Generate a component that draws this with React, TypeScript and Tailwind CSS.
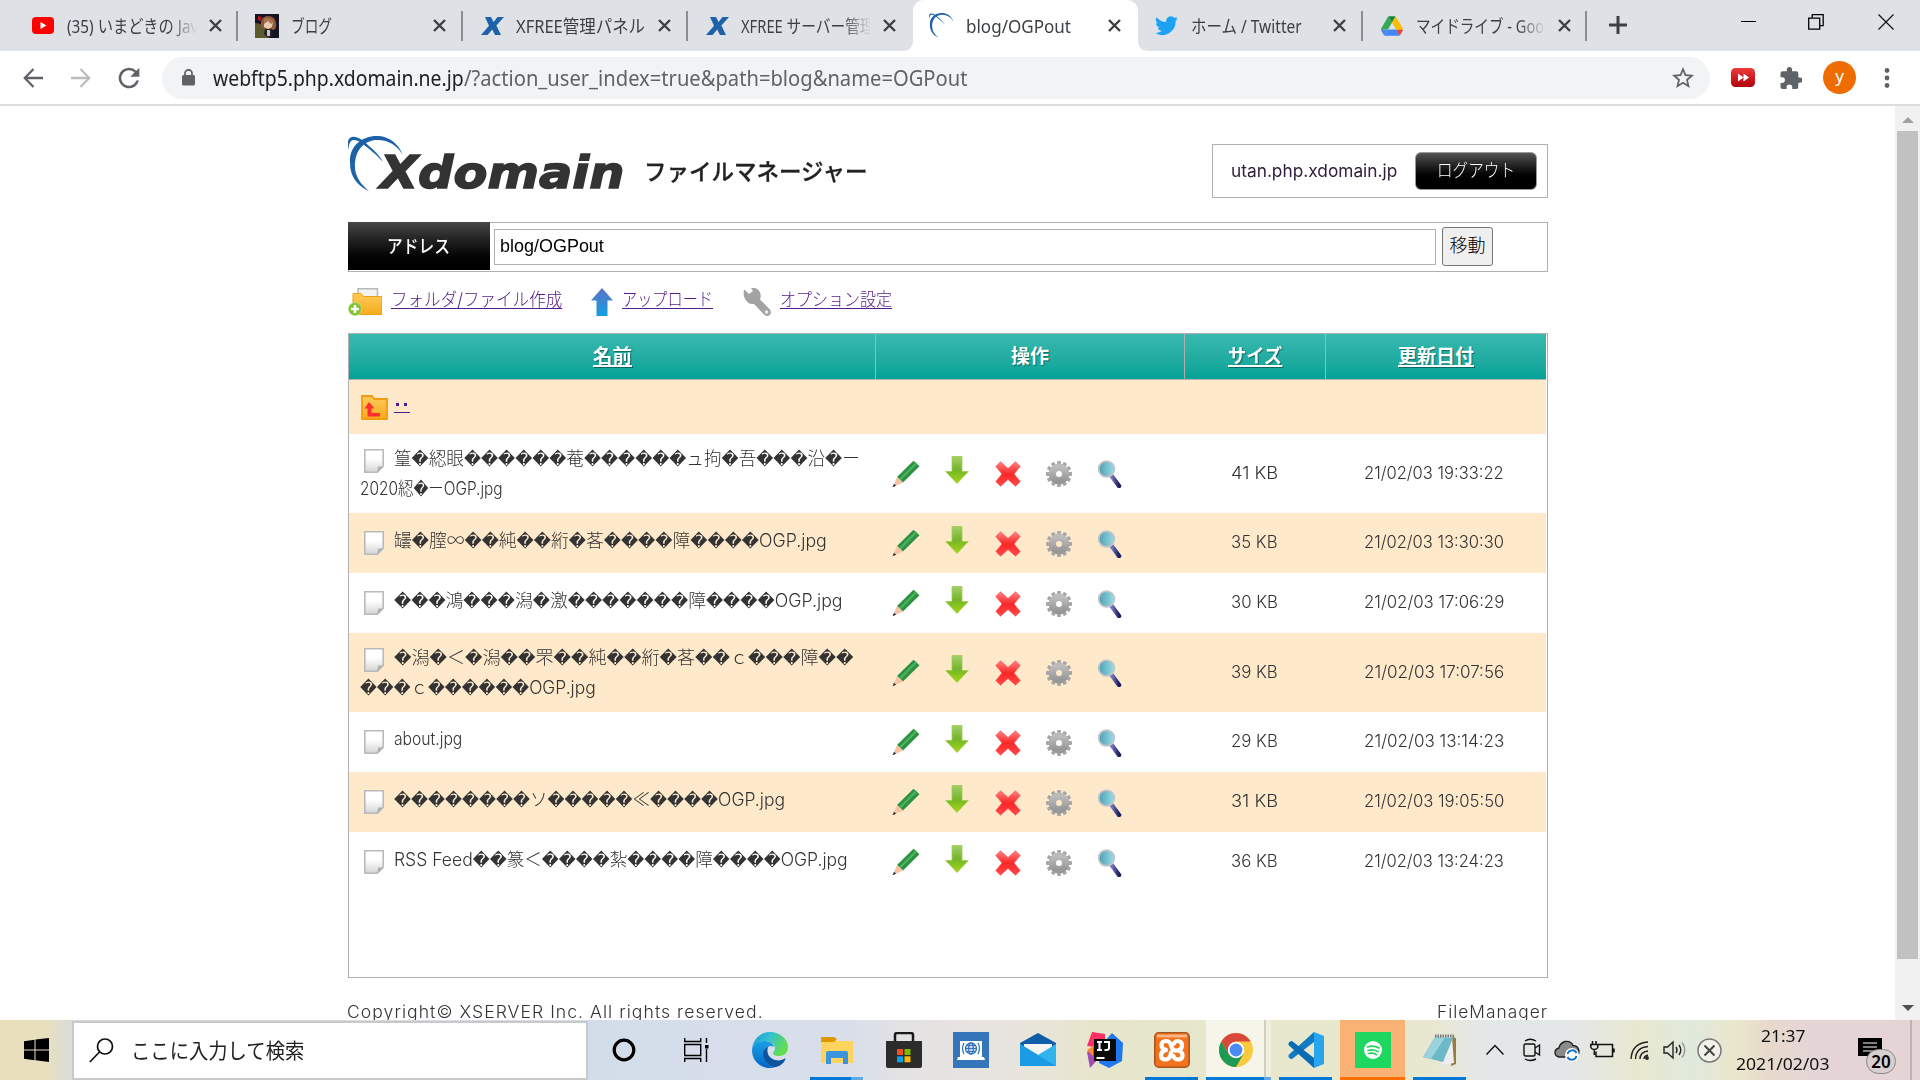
import React, { useLayoutEffect, useRef, useState } from "react";

/** Single line of text whose glyphs are condensed or widened to a given width. */
function Fit({ w, className = "", inner = "", children }: { w: number; className?: string; inner?: string; children: React.ReactNode }) {
  const ref = useRef<HTMLSpanElement>(null);
  const [k, setK] = useState(1);
  useLayoutEffect(() => {
    if (ref.current && ref.current.offsetWidth) setK(w / ref.current.offsetWidth);
  }, [w]);
  return (
    <span className={"block shrink-0 whitespace-nowrap " + className} style={{ width: w }}>
      <span ref={ref} className={"inline-block origin-left " + inner} style={{ transform: `scaleX(${k})` }}>
        {children}
      </span>
    </span>
  );
}

const UI = "font-['Noto_Sans','Noto_Sans_CJK_JP',sans-serif]";
const GOTHIC = "font-['Inter','Noto_Sans_CJK_JP',sans-serif] font-light";

/* ---------- Browser chrome ---------- */

const YouTube = () => (
  <svg width="22" height="17" viewBox="0 0 22 17"><rect width="22" height="17" rx="4" fill="#f00" /><path d="M8.5 5v7l6-3.5z" fill="#fff" /></svg>
);
const Portrait = () => (
  <svg width="24" height="24" viewBox="0 0 24 24">
    <rect width="24" height="24" fill="#171321" />
    <path d="M0 9q7 0 10 6t4 9H0z" fill="#5d5a2c" />
    <path d="M6 8q1-6 7-6 7 0 8 7 1 5-2 7l-10-1q-4-2-3-7z" fill="#8b5a3c" />
    <path d="M9 8q4-3 9 0l-1 5-4 2-4-2z" fill="#e9c9b0" />
    <path d="M9 5q5-3 10 3l-3 2-3-3-4 3z" fill="#a87350" />
    <path d="M3 2l4 1-1 4-3-1z" fill="#b01a1a" />
    <path d="M10 15h7l1 5-2 3h-4l-3-3z" fill="#24202c" /><path d="M12 16h3v6h-3z" fill="#cfc4c0" />
  </svg>
);
const XMark = () => (
  <svg width="23" height="18" viewBox="0 0 23 18"><path d="M4 0h6l2.600 5L16.500 0H23l-7.600 8.600L20 18h-6l-2.700-5.600L6.500 18H0l8-9.300z" fill="#1d62a8" /></svg>
);
const Swoosh = ({ size }: { size: number }) => (
  <svg width={size} height={size} viewBox="0 0 56 56">
    <path d="M55 19C49 5 38-1 26 0 10 2 1 13 2 27c0 13 7 23 19 28C11 47 6 38 7 27 8 14 15 6 27 4c12-1 21 4 28 15z" fill="#1d62a8" />
    <path d="M0 14C-1 6 0 2 4 1c5-1 11 3 17 9 6 5 11 10 14 16C28 18 21 13 15 8 10 4 5 3 3 5c-2 2-2 5-3 9z" fill="#1d62a8" />
  </svg>
);
const Bird = () => (
  <svg width="23" height="20" viewBox="1 3 22 18.500"><path fill="#1da1f2" d="M23 5.100a9 9 0 0 1-2.600.7 4.500 4.500 0 0 0 2-2.500 9 9 0 0 1-2.900 1.100 4.500 4.500 0 0 0-7.700 4.100A12.800 12.800 0 0 1 2.500 3.800a4.500 4.500 0 0 0 1.400 6 4.500 4.500 0 0 1-2-.6c0 2.200 1.500 4 3.600 4.500a4.500 4.500 0 0 1-2 .1 4.500 4.500 0 0 0 4.200 3.100A9 9 0 0 1 1 18.800a12.800 12.800 0 0 0 19.700-11.400A9 9 0 0 0 23 5.100z" /></svg>
);
const Drive = () => (
  <svg width="22" height="20" viewBox="0 0 87.3 78">
    <path d="m6.600 66.850 3.850 6.650c.8 1.400 1.950 2.500 3.300 3.300l13.750-23.800h-27.500c0 1.550.4 3.100 1.200 4.500z" fill="#4285f4" />
    <path d="m43.650 25-13.750-23.800c-1.350.8-2.500 1.900-3.300 3.300l-25.400 44a9.060 9.060 0 0 0 -1.200 4.500h27.500z" fill="#34a853" />
    <path d="m73.550 76.800c1.350-.8 2.500-1.900 3.300-3.300l1.600-2.750 7.650-13.250c.8-1.400 1.200-2.950 1.200-4.500h-27.500l5.850 11.500z" fill="#ea4335" />
    <path d="m43.650 25 13.750-23.800c-1.350-.8-2.900-1.200-4.500-1.200h-18.500c-1.600 0-3.150.45-4.500 1.200z" fill="#188038" />
    <path d="m59.800 53h-32.300l-13.750 23.800c1.350.8 2.900 1.200 4.500 1.200h50.800c1.600 0 3.150-.45 4.500-1.200z" fill="#4285f4" />
    <path d="m73.400 26.500-12.700-22c-.8-1.400-1.950-2.500-3.300-3.300l-13.750 23.800 16.150 28h27.450c0-1.550-.4-3.100-1.200-4.500z" fill="#fbbc04" />
  </svg>
);
const Close = () => (
  <svg width="13" height="13" viewBox="0 0 13 13" stroke="#3c4043" strokeWidth="2.400"><path d="M1 1l11 11M12 1L1 12" /></svg>
);

type TabData = { icon: React.ReactNode; title: string; w: number; fade?: boolean; active?: boolean; line?: boolean };
const TABS: TabData[] = [
  { icon: <YouTube />, title: "(35) いまどきの Jav", w: 131, fade: true, line: true },
  { icon: <Portrait />, title: "ブログ", w: 41, line: true },
  { icon: <XMark />, title: "XFREE管理パネル", w: 129, line: true },
  { icon: <XMark />, title: "XFREE サーバー管理", w: 134, fade: true },
  { icon: <Swoosh size={25} />, title: "blog/OGPout", w: 105, active: true },
  { icon: <Bird />, title: "ホーム / Twitter", w: 111, line: true },
  { icon: <Drive />, title: "マイドライブ - Goo", w: 128, fade: true, line: true },
];

function Tab({ t }: { t: TabData }) {
  return (
    <div className={"relative flex h-[51px] w-[224.850px] shrink-0 items-center " + (t.active ? "rounded-t-[11px] bg-white" : "")}>
      <div className="ml-[16px] flex w-[26px] justify-center">{t.icon}</div>
      <div className={"ml-[11px] w-[134px] overflow-hidden pt-px " + (t.fade ? "[mask-image:linear-gradient(to_right,black_76%,transparent_97%)]" : "")}>
        <Fit w={t.w} className="text-[18px] leading-[30px] text-[#3c4043]">{t.title}</Fit>
      </div>
      <div className="ml-[8px] -mt-px"><Close /></div>
      {t.line && <div className="absolute top-[11px] right-0 h-[30px] w-[2px] bg-[#8b8e93]" />}
      {t.active && (
        <>
          <svg className="absolute bottom-0 left-[-11px]" width="11" height="11"><path d="M11 0v11H0Q11 11 11 0z" fill="#fff" /></svg>
          <svg className="absolute right-[-11px] bottom-0" width="11" height="11"><path d="M0 0v11h11Q0 11 0 0z" fill="#fff" /></svg>
        </>
      )}
    </div>
  );
}

function TabStrip() {
  return (
    <div className="flex h-[51px] bg-[#dee1e6] pl-[13.500px]">
      {TABS.map((t) => <Tab key={t.title} t={t} />)}
      <div className="flex flex-1 items-center">
        <svg className="-mt-px ml-[21.500px]" width="18" height="18" stroke="#3c4043" strokeWidth="3"><path d="M9 0v18M0 9h18" /></svg>
        <svg className="ml-[114px] -mt-2" width="15" height="15" stroke="#000"><path d="M0 7.500h15" /></svg>
        <svg className="ml-[52px] -mt-2" width="16" height="16" fill="none" stroke="#000" strokeWidth="1.300"><path d="M.7 4.200h11v11H.7zM4.200 4V.7h11v11H12" /></svg>
        <svg className="ml-[54px] -mt-2" width="16" height="16" stroke="#111" strokeWidth="1.200"><path d="M.5 .5l15 15M15.500.5l-15 15" /></svg>
      </div>
    </div>
  );
}

function Toolbar() {
  return (
    <div className="flex h-[55px] items-center border-b-2 border-[#dcdde0] bg-white">
      <svg className="ml-[23px]" width="20" height="20" fill="none" stroke="#5f6368" strokeWidth="2.300"><path d="M20 10H2M10.500 1L1.800 10l8.700 9" /></svg>
      <svg className="ml-[28px]" width="20" height="20" fill="none" stroke="#bbbdc0" strokeWidth="2.300"><path d="M0 10h18M9.500 1l8.700 9-8.700 9" /></svg>
      <svg className="ml-[27px]" width="22" height="22" viewBox="3.500 3.500 17 17" fill="#5f6368"><path d="M17.650 6.350A7.960 7.960 0 0 0 12 4a8 8 0 1 0 7.730 10h-2.080A6 6 0 1 1 12 6c1.660 0 3.140.69 4.220 1.780L13 11h7V4z" /></svg>
      <div className="ml-[22px] flex h-[42px] w-[1548px] items-center rounded-full bg-[#f1f3f4]">
        <svg className="ml-[20px]" width="13" height="17" viewBox="0 0 13 17"><rect y="6" width="13" height="10.500" rx="1.500" fill="#5f6368" /><path d="M3 7V4.300a3.500 3.500 0 0 1 7 0V7" fill="none" stroke="#5f6368" strokeWidth="1.800" /></svg>
        <Fit w={251} className="ml-[18px] text-[21px] leading-[36px] text-[#202124]">webftp5.php.xdomain.ne.jp</Fit>
        <Fit w={503} className="text-[21px] leading-[36px] text-[#5f6368]">/?action_user_index=true&amp;path=blog&amp;name=OGPout</Fit>
        <svg className="ml-[705px]" width="22" height="22" viewBox="2 2 20 20" fill="#5f6368"><path d="M22 9.240l-7.190-.62L12 2 9.190 8.630 2 9.240l5.460 4.730L5.820 21 12 17.270 18.180 21l-1.630-7.030L22 9.240zM12 15.400l-3.760 2.270 1-4.280-3.320-2.880 4.380-.38L12 6.100l1.710 4.040 4.380.38-3.320 2.880 1 4.280L12 15.400z" /></svg>
      </div>
      <svg className="ml-[21px]" width="24" height="19" viewBox="0 0 24 19"><defs><linearGradient id="ff" x2="0" y2="1"><stop stopColor="#f03a3a" /><stop offset="1" stopColor="#b0000a" /></linearGradient></defs><rect width="24" height="19" rx="4.500" fill="url(#ff)" /><path d="M7 5.500v8l5.500-4zM12.500 5.500v8l5.500-4z" fill="#fff" /></svg>
      <svg className="ml-[25px]" width="22" height="22" viewBox="1.500 1 21 21" fill="#5f6368"><path d="M20.500 11H19V7a2 2 0 0 0-2-2h-4V3.500a2.500 2.500 0 0 0-5 0V5H4a2 2 0 0 0-2 2v3.800h1.500a2.700 2.700 0 0 1 0 5.400H2V20a2 2 0 0 0 2 2h3.800v-1.500a2.700 2.700 0 0 1 5.400 0V22H17a2 2 0 0 0 2-2v-4h1.500a2.500 2.500 0 0 0 0-5z" /></svg>
      <div className="ml-[21px] flex size-[33px] items-center justify-center rounded-full bg-[#ee6c00] pb-1 text-[17px] text-white">y</div>
      <svg className="ml-[28px]" width="6" height="22" fill="#5f6368"><circle cx="3" cy="3.500" r="2.400" /><circle cx="3" cy="11" r="2.400" /><circle cx="3" cy="18.500" r="2.400" /></svg>
    </div>
  );
}

/* ---------- File manager icons ---------- */

const Defs = () => (
  <svg className="absolute size-0">
    <defs>
      <linearGradient id="gPage" x2="0" y2="1"><stop offset=".4" stopColor="#fff" /><stop offset="1" stopColor="#d4d4d4" /></linearGradient>
      <linearGradient id="gFolder" x2="0" y2="1"><stop stopColor="#ffcb5c" /><stop offset="1" stopColor="#f7ab1c" /></linearGradient>
      <linearGradient id="gUp" x2="0" y2="1"><stop stopColor="#6070c8" /><stop offset="1" stopColor="#12a0e0" /></linearGradient>
      <linearGradient id="gDown" x2="0" y2="1"><stop stopColor="#a3cf68" /><stop offset=".5" stopColor="#74b52a" /><stop offset="1" stopColor="#a5d610" /></linearGradient>
      <linearGradient id="gX" x2="0" y2="1"><stop stopColor="#ff8585" /><stop offset=".5" stopColor="#f92626" /><stop offset="1" stopColor="#ff4a4a" /></linearGradient>
      <linearGradient id="gGear" x2="0" y2="1"><stop stopColor="#bcbcbc" /><stop offset="1" stopColor="#979797" /></linearGradient>
      <linearGradient id="gLens" x2="1" y2="0"><stop stopColor="#4f9fb2" /><stop offset="1" stopColor="#9adce8" /></linearGradient>
      <linearGradient id="gHandle" x2="1" y2="0"><stop stopColor="#7478c0" /><stop offset="1" stopColor="#1a1d58" /></linearGradient>
    </defs>
  </svg>
);
const Page = () => (
  <svg width="20" height="24"><path d="M.8.8h18.400v16.400l-5.800 6H.8z" fill="url(#gPage)" stroke="#bababa" strokeWidth="1.600" /><path d="M19.500 17.500h-5.300l-1 6z" fill="#b0b0b0" /></svg>
);
const Pencil = () => (
  <svg width="28" height="28" viewBox="0 0 28 28"><path d="M5 17L21.500.8l6 5.500L11 22.500z" fill="#2e9245" /><path d="M8 19.500L24.500 3" stroke="#4db45c" strokeWidth="2" /><path d="M5 17l6 5.500L.8 27z" fill="#f4c3a4" /><path d="M2 23.800L4.200 25.800.5 27.300z" fill="#333" /></svg>
);
const Download = () => (
  <svg className="-mt-[7px]" width="24" height="28"><path d="M7 .5h10v15h6.300L12 27.500.7 15.500H7z" fill="url(#gDown)" stroke="#a0cc50" strokeWidth=".8" /></svg>
);
const Delete = () => (
  <svg width="26" height="26"><path d="M5.500.8L13 7.500 20.500.8l4.700 4.700L19 13l6.200 7.500-4.700 4.700L13 18.500l-7.500 6.700L.8 20.500 7 13 .8 5.500z" fill="url(#gX)" stroke="#ff5a5a" strokeWidth=".8" strokeLinejoin="round" /></svg>
);
const Gear = () => (
  <svg width="26" height="26" viewBox="-13 -13 26 26">
    {Array.from({ length: 12 }, (_, i) => <rect key={i} x="-1.900" y="-13" width="3.800" height="5" rx=".8" fill="#a6a6a6" transform={`rotate(${i * 30})`} />)}
    <circle r="6.700" fill="none" stroke="url(#gGear)" strokeWidth="7.400" />
  </svg>
);
const Magnify = () => (
  <svg width="25" height="28"><path d="M15 16.500l7 9.500" stroke="url(#gHandle)" strokeWidth="4.600" strokeLinecap="round" /><circle cx="9.500" cy="9" r="7.800" fill="url(#gLens)" stroke="#c3c3c8" strokeWidth="1.800" /></svg>
);
const NewFolder = () => (
  <svg width="34" height="28"><path d="M10 .8h19.500v12H10z" fill="#f3f3f3" stroke="#b9b9b9" strokeWidth="1.500" /><path d="M5 5.500h8l2.500 3H34v18H5z" fill="url(#gFolder)" stroke="#efa013" /><circle cx="7" cy="21" r="6.500" fill="#82c32c" stroke="#b9dd8b" /><path d="M7 17v8M3 21h8" stroke="#fff" strokeWidth="2.500" /></svg>
);
const Upload = () => (
  <svg width="22" height="28"><path d="M11 0l11 12.500h-5.500V28h-11V12.500H0z" fill="url(#gUp)" /></svg>
);
const Wrench = () => (
  <svg width="28" height="28"><path d="M1 8.500Q0 3 1.500 1.500L6 6l4-3L8 0q8-1 9.500 6 .6 3-.5 5.500L27 21.500q2.500 5-2.500 6.500-2.500 0-4-2L11 16Q4 17 1 8.500z" fill="#a3a3a3" /><circle cx="23.500" cy="24" r="1.700" fill="#eee" /></svg>
);
const UpFolder = () => (
  <svg width="27" height="25"><path d="M1 1h10l2.500 3H26v20H1z" fill="url(#gFolder)" stroke="#f29c10" strokeWidth="1.800" /><path d="M8 7l5.500 6.500h-3V18H19v3.500H6.500v-8h-3z" fill="#ff2d2d" /></svg>
);

/* ---------- File manager ---------- */

type Row = { lines: [string, number][]; size: string; date: string };
const ROWS: Row[] = [
  { lines: [["篁�綛眼������菴������ュ拘�吾���沿�ー", 466], ["2020綛�ーOGP.jpg", 143]], size: "41 KB", date: "21/02/03 19:33:22" },
  { lines: [["罎�膣∞��純��絎�茖����障����OGP.jpg", 433]], size: "35 KB", date: "21/02/03 13:30:30" },
  { lines: [["���鴻���潟�激�������障����OGP.jpg", 449]], size: "30 KB", date: "21/02/03 17:06:29" },
  { lines: [["�潟�＜�潟��罘��純��絎�茖��ｃ���障��", 459], ["���ｃ������OGP.jpg", 236]], size: "39 KB", date: "21/02/03 17:07:56" },
  { lines: [["about.jpg", 68]], size: "29 KB", date: "21/02/03 13:14:23" },
  { lines: [["��������ソ�����≪����OGP.jpg", 391]], size: "31 KB", date: "21/02/03 19:05:50" },
  { lines: [["RSS Feed��篆＜����紮����障����OGP.jpg", 454]], size: "36 KB", date: "21/02/03 13:24:23" },
];

const nameFace = (s: string) => {
  if (s.startsWith("\uFFFD")) return "font-['DejaVu_Sans',sans-serif] text-[17px] font-normal";
  if (/^[\x20-\x7e]+$/.test(s)) return "text-[18px]";
  return "font-['Noto_Sans_CJK_JP',sans-serif]";
};

/** Unmappable bytes are set in a face that has the black diamond glyph. */
function Name({ text, w }: { text: string; w: number }) {
  return (
    <Fit w={w} className="h-[30px] text-[18px] leading-[30px]">
      {text.split(/(\uFFFD+|[\x20-\x7e]+)/).filter(Boolean).map((s, i) => (
        <span key={i} className={nameFace(s)}>{s}</span>
      ))}
    </Fit>
  );
}

function FileRow({ row, alt }: { row: Row; alt: boolean }) {
  const two = row.lines.length > 1;
  const latin = /^[\x20-\x7e]+$/.test(row.lines[0][0]);
  return (
    <div className={"grid w-[1197px] grid-cols-[527px_309px_141px_220px] " + (two ? "h-[79px] " : "h-[60px] ") + (alt ? "bg-[#ffe9cb]" : "bg-white")}>
      <div className={"pl-[11px] " + (two ? "pt-[8px]" : "pt-[11px]")}>
        <div className="flex h-[30px]">
          <div className="mt-[7px] ml-[4px] w-[29.500px]"><Page /></div>
          <div className={latin ? "mt-px" : ""}><Name text={row.lines[0][0]} w={row.lines[0][1]} /></div>
        </div>
        {two && <Name text={row.lines[1][0]} w={row.lines[1][1]} />}
      </div>
      <div className="flex items-center pt-px pl-[4px]">
        {[<Pencil />, <Download />, <Delete />, <Gear />, <Magnify />].map((icon, i) => (
          <div key={i} className={"flex w-[51px] justify-center " + (i < 2 ? "-mt-px" : "")}>{icon}</div>
        ))}
      </div>
      <div className="flex items-center justify-center pr-[3px] pb-px"><Fit w={47} className="text-[17.500px]">{row.size}</Fit></div>
      <div className="flex items-center justify-center pr-[4px] pb-px"><Fit w={140} className="text-[17.500px]">{row.date}</Fit></div>
    </div>
  );
}

function Head({ label, w, last, plain }: { label: string; w: number; last?: boolean; plain?: boolean }) {
  return (
    <div className={"flex items-center justify-center border-b border-[#b0b0b0] bg-linear-to-b from-[#37b8b0] to-[#00a396] " + (last ? "" : "border-r")}>
      <Fit w={w} className="text-[19px] leading-[30px] font-bold text-white [text-shadow:1px_1px_1px_rgba(0,60,60,0.6)]" inner={plain ? "" : "underline decoration-[1.500px] underline-offset-[2px]"}>{label}</Fit>
    </div>
  );
}

const LINK = "text-[18px] leading-[30px] text-[#551a8b]";
const LINE = "underline decoration-1 underline-offset-[2px]";

function FileManager() {
  return (
    <div className={"ml-[348px] w-[1200px] shrink-0 text-[#333] " + GOTHIC}>
      <div className="flex h-[116px]">
        <div className="mt-[30px] grid">
          <div className="col-start-1 row-start-1"><Swoosh size={56} /></div>
          <Fit w={245} className="col-start-1 row-start-1 mt-[10px] ml-[32px] font-['DejaVu_Sans',sans-serif] text-[45px] leading-[54px] font-bold italic [-webkit-text-stroke:1.500px_#333]">Xdomain</Fit>
        </div>
        <Fit w={223} className="mt-[48px] ml-[19px] text-[23px] leading-[36px] font-medium text-[#222] [-webkit-text-stroke:0.300px_#222]">ファイルマネージャー</Fit>
        <div className="mt-[38px] ml-auto flex h-[54px] w-[336px] items-center border border-[#b0b0b0]">
          <Fit w={166} className="ml-[18px] text-[17.500px] font-normal text-[#33203c]">utan.php.xdomain.jp</Fit>
          <div className="ml-[18px] flex h-[38px] w-[122px] items-center justify-center rounded-[6px] border border-[#999] bg-linear-to-b from-[#555] to-black to-80%">
            <Fit w={78} className="pb-[2px] text-[18px] text-white">ログアウト</Fit>
          </div>
        </div>
      </div>
      <div className="flex h-[50px] border border-[#b0b0b0]">
        <div className="-mt-px -ml-px flex h-[48px] w-[142px] items-center justify-center bg-linear-to-b from-[#484848] to-black">
          <Fit w={63} className="mr-[2px] text-[18px] font-medium text-white">アドレス</Fit>
        </div>
        <div className="mt-[6px] ml-[4px] flex h-[36px] w-[942px] items-center border border-[#b0b0b0] pb-[2px]">
          <Fit w={104} className="ml-[5px] font-['Liberation_Sans',sans-serif] text-[19px] font-normal text-black">blog/OGPout</Fit>
        </div>
        <div className="mt-[4px] ml-[6px] flex h-[39px] w-[51px] items-center justify-center rounded-[3px] border border-[#767676] bg-[#efefef]">
          <Fit w={36} className="pb-[3px] text-[18px] font-light text-black">移動</Fit>
        </div>
      </div>
      <div className="flex h-[61px] pt-[16px]">
        <NewFolder />
        <Fit w={171} className={"-mt-[3px] ml-[9px] " + LINK} inner={LINE}>フォルダ/ファイル作成</Fit>
        <div className="ml-[29px]"><Upload /></div>
        <Fit w={91} className={"-mt-[3px] ml-[9px] " + LINK} inner={LINE}>アップロード</Fit>
        <div className="ml-[30px]"><Wrench /></div>
        <Fit w={112} className={"-mt-[3px] ml-[9px] " + LINK} inner={LINE}>オプション設定</Fit>
      </div>
      <div className="h-[645px] border border-[#b0b0b0]">
        <div className="grid h-[46px] w-[1197px] grid-cols-[527px_309px_141px_220px]">
          <Head label="名前" w={39} />
          <Head label="操作" w={38} plain />
          <Head label="サイズ" w={54} />
          <Head label="更新日付" w={76} last />
        </div>
        <div className="flex h-[54px] w-[1197px] bg-[#ffe9cb] pt-[15px] pl-[12px]">
          <UpFolder />
          <svg className="mt-[7px] ml-[6px]" width="16" height="12"><path d="M0 10.500h16" stroke="#551a8b" /><path d="M2 1h3v3H2zM10 1h3v3h-3z" fill="#551a8b" /></svg>
        </div>
        {ROWS.map((r, i) => <FileRow key={r.date} row={r} alt={i % 2 === 1} />)}
      </div>
      <div className="mt-[19px] flex justify-between text-[17px] leading-[30px]">
        <Fit w={417} className="-ml-px tracking-[1px]">Copyright© XSERVER Inc. All rights reserved.</Fit>
        <Fit w={111} className="tracking-[1px]">FileManager</Fit>
      </div>
    </div>
  );
}

/* ---------- Taskbar ---------- */

const Edge = () => (
  <svg width="36" height="36" viewBox="0 0 36 36">
    <defs>
      <linearGradient id="e1" x2="1" y2=".4"><stop stopColor="#1598d8" /><stop offset=".5" stopColor="#35c0d0" /><stop offset="1" stopColor="#62dd50" /></linearGradient>
      <linearGradient id="e2" x2="0" y2="1"><stop stopColor="#1ba0e4" /><stop offset="1" stopColor="#0067c8" /></linearGradient>
    </defs>
    <path d="M0 16C2 6 9 0 18 0c10 0 18 7 18 15 0 6-4 9-9 9-4 0-6-1-6-3 0-1 2-2 2-5 0-3-4-7-10-7C7 9 1 12 0 16z" fill="url(#e1)" />
    <path d="M0 18C0 12 6 9 12 9c5 0 9 2 10 6-6-3-11 2-10 9 1 6 5 11 11 12C10 38 0 30 0 18z" fill="url(#e2)" />
    <path d="M17 14c-5 2-7 7-5 12 2 6 7 10 12 9 4-1 8-4 9-7 1-1 0-2-1-1-5 3-14 1-16-5-1-3-1-6 1-8z" fill="#0c529e" />
  </svg>
);
const Explorer = () => (
  <svg width="32" height="27"><path d="M0 1h13l3 3h16v22H0z" fill="#ffd45e" /><path d="M0 1q0-1 1-1h12l3 2-3 3H0z" fill="#df9800" /><path d="M5 27V16q0-2 2-2h18q2 0 2 2v11h-5v-6H10v6z" fill="#3b95dc" /></svg>
);
const Store = () => (
  <svg width="36" height="36"><path d="M9 11V3q0-2 2-2h14q2 0 2 2v8" fill="none" stroke="#1a1a1a" strokeWidth="2.500" /><path d="M0 9h36v25q0 2-2 2H2q-2 0-2-2z" fill="#2c2c2c" /><path d="M11 17h6v6h-6z" fill="#f25022" /><path d="M18.500 17h6v6h-6z" fill="#7fba00" /><path d="M11 24.300h6v6h-6z" fill="#00a4ef" /><path d="M18.500 24.300h6v6h-6z" fill="#ffb900" /></svg>
);
const Remote = () => (
  <svg width="36" height="36"><path d="M0 0h36v36H0z" fill="#3575ba" /><path d="M7 9h22v16h2l1 3H4l1-3h2z" fill="#fff" /><g fill="none" stroke="#3575ba" strokeWidth="1.300"><circle cx="18" cy="16.500" r="5.500" /><ellipse cx="18" cy="16.500" rx="2.300" ry="5.500" /><path d="M12.500 16.500h11M13.500 13.500h9M13.500 19.500h9M11 11q-3 5 0 11M25 11q3 5 0 11" /></g></svg>
);
const Mail = () => (
  <svg width="36" height="34"><path d="M0 10L18 0l18 10v8H0z" fill="#0f5ca8" /><path d="M4 11h28v12H4z" fill="#f4f4f4" /><path d="M0 11l18 11 18-11v22H0z" fill="#31b4ee" /><path d="M0 33h36L18 22 0 11z" fill="#1b9be4" /></svg>
);
const Idea = () => (
  <svg width="36" height="36"><path d="M5 0l13 2v14L0 14z" fill="#fb2f63" /><path d="M0 20l8-6 4 12-9 10z" fill="#a24bb5" /><path d="M0 18l6-4v10z" fill="#f98d2b" /><path d="M25 1l11 10-1 18-13 7-10-5 4-20z" fill="#1f78ee" /><path d="M7 7h22v22H7z" fill="#0a0a0a" /><path d="M9.500 26h8" stroke="#fff" strokeWidth="2" /><path d="M10 10h5M12.500 10v8M10 18h5M17 10h5v6q0 2-2.500 2H17.500" fill="none" stroke="#fff" strokeWidth="2" /></svg>
);
const Xampp = () => (
  <svg width="36" height="36">
    <rect x=".8" y=".8" width="34.400" height="34.400" rx="4" fill="#f3731d" stroke="#a8581f" strokeWidth="1.600" />
    <path d="M3 2.500h30v3H3z" fill="#f9b487" />
    <path d="M12 18Q7.500 17 7.500 13q0-4 4.500-4 4 0 5 4l1 3q1 3 5 2.500 5-.5 5-5 0-4.500-4.500-4.500-2.500 0-3.500 2.500M12 18q-5 1.500-5 5.500 0 4 4.500 4 4 0 5-4.500l.5-2.500M24 18.500q4.500 1 4.500 5 0 4-4.500 4-3.500 0-4.500-3.500" fill="none" stroke="#fff" strokeWidth="4.200" strokeLinecap="round" strokeLinejoin="round" />
  </svg>
);
const Chrome = () => (
  <svg width="34" height="34" viewBox="-17 -17 34 34"><circle r="17" fill="#fbc93c" /><path d="M-14.700-8.500A17 17 0 0 1 14.700-8.500L0-8.500-7.400 4.200z" fill="#d9483b" /><path d="M-14.700-8.500A17 17 0 0 0 0 17L7.400 4.200-7.400 4.200z" fill="#1e9a55" /><circle r="8.200" fill="#fff" /><circle r="6.400" fill="#4c8bf5" /></svg>
);
const Code = () => (
  <svg width="36" height="36"><path d="M26 0l10 4v28l-10 4V0z" fill="#29a5ee" /><path d="M26 0v10L4 27q-1.500.5-3-1.500-1.200-1.500 0-3z" fill="#0f7bc4" /><path d="M26 36V26L4 9Q2.500 8.500 1 10.500q-1.200 1.500 0 3z" fill="#0a6db3" /></svg>
);
const Spotify = () => (
  <svg width="36" height="36"><path d="M0 0h36v36H0z" fill="#1ed760" /><circle cx="18" cy="18" r="9" fill="#fff" /><path d="M12.500 15q6-2 11.500 1M13 18.500q5-1.500 10 1M13.500 21.500q4-1 8 1" fill="none" stroke="#1ed760" strokeWidth="1.700" strokeLinecap="round" /></svg>
);
const Notepad = () => (
  <svg width="34" height="32"><path d="M29 3l4 1v26l-5 2z" fill="#9b7b45" /><path d="M29 3l2 26-13 2z" fill="#eceef0" /><path d="M12 3l18 1-10 24L0 23z" fill="#6ab8c8" /><path d="M12 3l10 .5L8 25l-8-2z" fill="#9bd3dc" /><path d="M12 2h19" stroke="#777" strokeWidth="3" strokeDasharray="1.500 1" /></svg>
);

const APPS: { icon: React.ReactNode; open?: "plain" | "stack" | "active" | "alert" }[] = [
  { icon: <Edge /> },
  { icon: <Explorer />, open: "stack" },
  { icon: <Store /> },
  { icon: <Remote /> },
  { icon: <Mail /> },
  { icon: <Idea /> },
  { icon: <Xampp />, open: "plain" },
  { icon: <Chrome />, open: "active" },
  { icon: <Code />, open: "plain" },
  { icon: <Spotify />, open: "alert" },
  { icon: <Notepad />, open: "plain" },
];

function TaskButton({ icon, open }: (typeof APPS)[number]) {
  return (
    <div className="relative flex w-[67px] shrink-0 items-center justify-center">
      {open === "active" && <div className="absolute inset-y-0 left-px flex w-[65px] bg-[#f6f5ea]"><div className="ml-[58px] w-[2px] bg-[#cfcfbb]" /><div className="flex-1 bg-[#efefdf]" /></div>}
      {open === "alert" && <div className="absolute inset-y-0 left-px w-[65px] bg-[#fab174]" />}
      <div className={"relative " + (open === "active" ? "-ml-[5px]" : "")}>{icon}</div>
      {open === "plain" && <div className="absolute bottom-0 left-[7px] h-[3px] w-[53px] bg-[#0078d7]" />}
      {open === "stack" && <div className="absolute bottom-0 left-[7px] flex h-[3px] w-[53px] bg-[#5fa9e6]"><div className="w-[41px] bg-[#0078d7]" /></div>}
      {open === "active" && <div className="absolute bottom-0 left-px flex h-[3px] w-[65px] bg-[#5fa9e6]"><div className="w-[58px] bg-[#0078d7]" /></div>}
      {open === "alert" && <div className="absolute bottom-0 left-px h-[3px] w-[65px] bg-[#ff6f00]" />}
    </div>
  );
}

function Tray() {
  return (
    <div className="flex items-center">
      <svg className="ml-[13px]" width="18" height="12" fill="none" stroke="#111" strokeWidth="1.500"><path d="M.5 10.500L9 1.500l8.500 9" /></svg>
      <svg className="ml-[19px]" width="18" height="24" fill="none" stroke="#111" strokeWidth="1.400"><rect x="1" y="6" width="11" height="12" rx="1.500" /><path d="M12 10l4.500-3v10L12 14M2 3q5-3.500 11 0M2 21q5 3 11 0" /></svg>
      <svg className="mt-[2px] ml-[13px]" width="26" height="22"><path d="M5 17q-4-1-4-4.500Q1 9 5 8q1-5 6-6.500 6-1 8 4 5 0 6 5.500 0 5-5 6z" fill="#8a8a8a" stroke="#222" strokeWidth="1.400" /><circle cx="18" cy="15" r="7" fill="#fff" /><path d="M13.500 14a4.800 4.800 0 0 1 9-1M22.500 16a4.800 4.800 0 0 1-9 1" fill="none" stroke="#1172cc" strokeWidth="1.800" /></svg>
      <svg className="ml-[10px]" width="25" height="18" fill="none" stroke="#111" strokeWidth="1.500"><path d="M8 3.500h14.500v12H6v-5M24 7.500v4M2.500 0v3M6 0v3M.8 3.500h7v3q-1 2-3.500 2T.8 6.500zM4.300 9v5" /></svg>
      <svg className="ml-[15px]" width="20" height="20" fill="none" stroke="#222" strokeWidth="1.400"><path d="M1 19Q2 3 18 2M5.500 19Q6 7.500 18 6.500M10 19q0-7 8-8M14 19q0-3 4-4" /><circle cx="17" cy="18" r="1.200" fill="#222" /></svg>
      <svg className="ml-[13px]" width="23" height="20" fill="none" stroke="#222" strokeWidth="1.400"><path d="M1 7h3.500L10 2v16l-5.500-5H1zM13 7q2 3 0 6M16 5q3.500 5 0 10" /><path d="M19 2.500q5.500 7.500 0 15" stroke="#999" /></svg>
      <svg className="ml-[11px]" width="25" height="25" fill="#f1f1ea" stroke="#777" strokeWidth="1.500"><circle cx="12.500" cy="12.500" r="11.500" /><path d="M7.500 7.500l10 10M17.500 7.500l-10 10" stroke="#444" strokeWidth="2" /></svg>
      <div className="ml-[14px] flex w-[93px] flex-col items-center text-[17px] leading-[28px] text-[#111]">
        <Fit w={44}>21:37</Fit>
        <Fit w={93}>2021/02/03</Fit>
      </div>
      <div className="relative ml-[29px] h-[42px] w-[52px]">
        <svg className="mt-[9px]" width="24" height="24"><path d="M0 0h24v18h-9v6l-6-6H0z" fill="#000" /><path d="M5 5h14M5 9h14M5 13h10" stroke="#fff" strokeWidth="1.200" /></svg>
        <div className="absolute top-[20px] left-[8px] flex h-[25px] w-[30px] items-center justify-center rounded-full border border-[#888] bg-[#d9cfcf] text-[17px] font-semibold text-black">20</div>
      </div>
      <div className="h-full w-[2px] bg-[#bfb2b2]" />
    </div>
  );
}

function Taskbar() {
  return (
    <div className="flex h-[60px] bg-[linear-gradient(to_right,#e9dfba_0px,#e8dfbd_45px,#d9dcdc_73px,#d3ddea_590px,#d8dfea_850px,#e5e2e3_910px,#e8e4df_1010px,#e7e6cd_1090px,#e6e7cc_1220px,#e8e8d0_1430px,#e4e7e8_1480px,#e4e7e8_1570px,#e8e8cf_1640px,#dfeadd_1690px,#eae7cd_1735px,#e7d9cc_1770px,#e5d5d6_1810px,#e4d4d6_1920px)]">
      <svg className="mt-[18px] ml-[24px] shrink-0" width="25" height="24"><path d="M0 3.300l10.500-1.500v9.700H0zM11.500 1.600L25 0v11.500H11.500zM0 12.500h10.500v9.700L0 20.700zM11.500 12.500H25V24l-13.500-1.700z" /></svg>
      <div className="mt-px ml-[23px] flex h-[59px] w-[516px] shrink-0 items-center border-2 border-[#c9c9c9] bg-white">
        <svg className="-mt-px ml-[15px]" width="25" height="25" fill="none" stroke="#111" strokeWidth="1.700"><circle cx="16" cy="8.500" r="7.500" /><path d="M10.500 14L.8 24" /></svg>
        <Fit w={173} className="ml-[17px] pt-px text-[21px] text-[#222]">ここに入力して検索</Fit>
      </div>
      <div className="flex w-[72px] shrink-0 items-center justify-center"><svg width="24" height="24"><circle cx="12" cy="12" r="9.800" fill="none" stroke="#000" strokeWidth="3.200" /></svg></div>
      <div className="flex w-[76px] shrink-0 items-center justify-center pr-[4px]">
        <svg width="25" height="24" fill="none" stroke="#000" strokeWidth="1.400"><path d="M.7 6.500h16v11H.7zM.7 0v3.500h16V0M.7 24v-3.500h16V24M22.500 0v5M22.500 11v13" /><path d="M21 7h3.500v3.500H21z" fill="#000" stroke="none" /></svg>
      </div>
      {APPS.map((a, i) => <TaskButton key={i} {...a} />)}
      <Tray />
    </div>
  );
}

export default function App() {
  return (
    <div className={"flex h-[1080px] w-[1920px] flex-col overflow-hidden bg-white " + UI}>
      <Defs />
      <TabStrip />
      <Toolbar />
      <div className="flex h-[914px] justify-between overflow-hidden">
        <FileManager />
        <div className="flex w-[25px] flex-col items-center bg-[#f1f1f1]">
          <svg className="mt-[10px]" width="12" height="7"><path d="M0 7l6-6 6 6z" fill="#a0a0a0" /></svg>
          <div className="mt-[8px] h-[828px] w-[21px] bg-[#c1c1c1]" />
          <svg className="mt-[46px]" width="12" height="7"><path d="M0 0h12L6 6z" fill="#505050" /></svg>
        </div>
      </div>
      <Taskbar />
    </div>
  );
}
